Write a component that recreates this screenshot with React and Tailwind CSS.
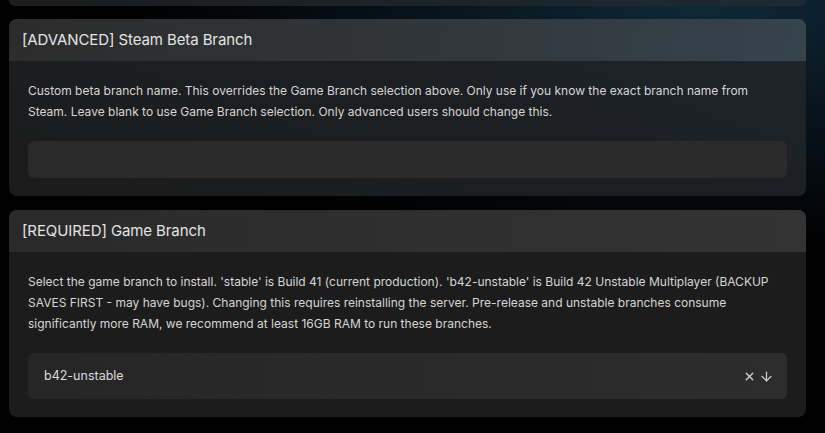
import React from 'react';
import { X, ArrowDown } from 'lucide-react';

function SettingCard({ title, description, headerClass, bodyClass, children }) {
  return (
    <div className={`rounded-lg overflow-hidden ${bodyClass}`}>
      <div className={`h-[42px] flex items-center px-[13px] ${headerClass}`}>
        <span className="text-[15px] text-[#e4e4e4] tracking-[-0.1px]">{title}</span>
      </div>
      <div className="px-[19px] pt-[19px] pb-[18px]">
        <p className="text-[12px] leading-[21px] text-[#d6d6d6]">{description}</p>
        <div className="mt-[19px]">{children}</div>
      </div>
    </div>
  );
}

export default function App() {
  return (
    <div
      className="w-full h-[433px] overflow-hidden bg-[radial-gradient(ellipse_70%_60%_at_85%_0%,#0f2938_0%,#071018_55%,#000_100%)] pl-[9px] pr-[19px]"
      style={{ fontFamily: 'Inter, "Noto Sans", sans-serif' }}
    >
      <div className="h-[6px] rounded-b-lg bg-[linear-gradient(90deg,#1b1c1d,#1e2a33)]" />

      <div className="mt-[13px]">
        <SettingCard
          title="[ADVANCED] Steam Beta Branch"
          headerClass="bg-[linear-gradient(100deg,#2c2c2c_0%,#303437_45%,#36444e_100%)]"
          bodyClass="bg-[linear-gradient(200deg,#1d262d_0%,#1c1f22_45%,#1b1b1b_100%)]"
          description="Custom beta branch name. This overrides the Game Branch selection above. Only use if you know the exact branch name from Steam. Leave blank to use Game Branch selection. Only advanced users should change this."
        >
          <div className="h-[37px] rounded-md bg-[#2b2b2b]" />
        </SettingCard>
      </div>

      <div className="mt-[14px]">
        <SettingCard
          title="[REQUIRED] Game Branch"
          headerClass="bg-[linear-gradient(90deg,#2a2a2a,#333333)]"
          bodyClass="bg-[#1c1c1c]"
          description="Select the game branch to install. 'stable' is Build 41 (current production). 'b42-unstable' is Build 42 Unstable Multiplayer (BACKUP SAVES FIRST - may have bugs). Changing this requires reinstalling the server. Pre-release and unstable branches consume significantly more RAM, we recommend at least 16GB RAM to run these branches."
        >
          <div className="h-[46px] rounded-md bg-[linear-gradient(90deg,#262626,#2d2d2d)] flex items-center pl-[16px] pr-[13px]">
            <span className="flex-1 text-[12.5px] text-[#dcdcdc]">b42-unstable</span>
            <div className="flex items-center gap-[3px] text-[#cfcfcf]">
              <X size={13} strokeWidth={2.5} />
              <ArrowDown size={15} strokeWidth={2} />
            </div>
          </div>
        </SettingCard>
      </div>
    </div>
  );
}
